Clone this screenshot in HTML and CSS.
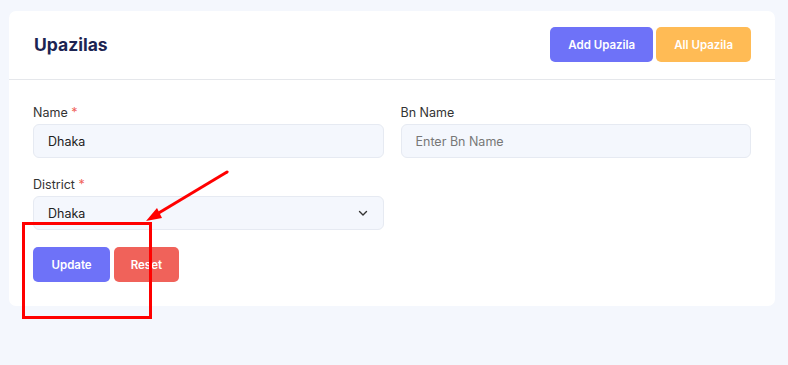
FILE: index.html
```html
<!DOCTYPE html>
<html>
<head>
    <title>Upazilas</title>
    <link rel="stylesheet" href="styles.css">
</head>
<body>
    <div class="card">
        <div class="card-header">
            <h2>Upazilas</h2>
            <div class="actions">
                <button type="button" class="btn btn-primary">Add Upazila</button>
                <button type="button" class="btn btn-warning">All Upazila</button>
            </div>
        </div>
        <div class="card-body">
            <form>
                <div class="row">
                    <div class="field">
                        <label for="name">Name <span class="req">*</span></label>
                        <input type="text" id="name" value="Dhaka">
                    </div>
                    <div class="field">
                        <label for="bnName">Bn Name</label>
                        <input type="text" id="bnName" placeholder="Enter Bn Name">
                    </div>
                </div>
                <div class="row">
                    <div class="field">
                        <label for="district">District <span class="req">*</span></label>
                        <div class="select">
                            <span>Dhaka</span>
                            <svg width="12" height="12" viewBox="0 0 12 12"><path d="M2.5 4.5 L6 8 L9.5 4.5" fill="none" stroke="#333" stroke-width="1.4" stroke-linecap="round" stroke-linejoin="round"/></svg>
                        </div>
                    </div>
                    <div class="field"></div>
                </div>
                <div class="buttons">
                    <button type="button" class="btn btn-primary btn-update">Update</button>
                    <button type="button" class="btn btn-danger btn-reset">Reset</button>
                </div>
            </form>
        </div>
    </div>
    <!-- annotation drawn over the screenshot -->
    <svg class="markup" width="788" height="365" viewBox="0 0 788 365">
        <rect x="23.5" y="223.5" width="127" height="94" fill="none" stroke="#ff0000" stroke-width="3"/>
        <line x1="227" y1="172" x2="152" y2="217" stroke="#ff0000" stroke-width="3" stroke-linecap="round"/>
        <polygon points="146,221 157,208 162,218" fill="#ff0000"/>
    </svg>
</body>
</html>
```
FILE: styles.css
```css
body {
    font-family: Inter, "Noto Sans", sans-serif;
    margin: 0;
    padding: 11px 13px 0 9px;
    background-color: #f4f7fd;
    color: #333;
    height: 365px;
    box-sizing: border-box;
}
.card {
    background-color: #fff;
    border-radius: 7px;
    width: 766px;
}
.card-header {
    display: flex;
    justify-content: space-between;
    align-items: center;
    padding: 16px 24px 17px 25px;
    border-bottom: 1px solid #e5e7eb;
    height: 35px;
}
.card-header h2 {
    margin: 0;
    font-size: 17.5px;
    font-weight: 700;
    color: #1c2452;
}
.actions {
    display: flex;
    gap: 3px;
}
.btn {
    font-family: inherit;
    font-size: 11.5px;
    font-weight: 600;
    color: #fff;
    border: none;
    border-radius: 5px;
    height: 35px;
    cursor: pointer;
}
.btn-primary {
    background-color: #6e72f8;
    padding: 0 18px;
}
.btn-warning {
    background-color: #ffbb55;
    padding: 0 18px;
}
.btn-danger {
    background-color: #f0625a;
}
.btn-update {
    padding: 0 18.5px;
}
.btn-reset {
    padding: 0 16.5px;
}
.card-body {
    padding: 25px 24px 24px 24px;
}
.row {
    display: flex;
    gap: 17px;
    margin-bottom: 19px;
}
.field {
    flex: 1;
    display: flex;
    flex-direction: column;
}
label {
    font-size: 12.5px;
    color: #333;
    margin-bottom: 3px;
    line-height: 16px;
}
.req {
    color: #f0625a;
}
input[type="text"], .select {
    font-family: inherit;
    font-size: 12.5px;
    color: #222;
    height: 34px;
    box-sizing: border-box;
    padding: 0 14px;
    background-color: #f4f7fd;
    border: 1px solid #e6eaf2;
    border-radius: 6px;
    outline: none;
}
input::placeholder {
    color: #777;
}
.select {
    display: flex;
    align-items: center;
    justify-content: space-between;
}
.buttons {
    display: flex;
    gap: 4px;
    margin-top: -2px;
}
.markup {
    position: absolute;
    left: 0;
    top: 0;
    pointer-events: none;
}
```
